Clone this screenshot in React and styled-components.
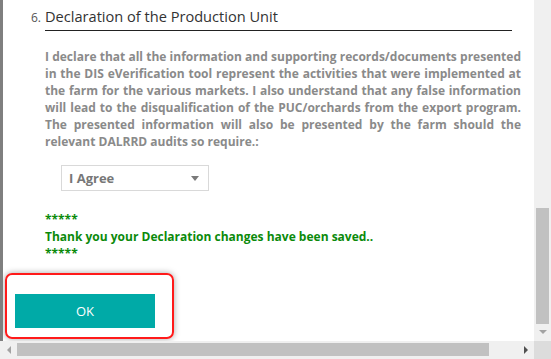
import React from "react";
import styled, { createGlobalStyle } from "styled-components";

const Global = createGlobalStyle`
  html, body { margin: 0; padding: 0; background: #fff; }
  body { font-family: "Open Sans", "Liberation Sans", sans-serif; }
`;

const Frame = styled.div`
  width: 551px;
  height: 359px;
  overflow: hidden;
  display: grid;
  grid-template-columns: 534px 17px;
  grid-template-rows: 341px 18px;
  background: #fff;
`;

const Viewport = styled.div`
  border-left: 3px solid #7f7f7f;
  display: flex;
  flex-direction: column;
  overflow: hidden;
  background: #fff;
`;

const Body = styled.div`
  padding: 6px 13px 0 28px;
`;

const TitleRow = styled.div`
  display: flex;
  align-items: baseline;
`;

const Num = styled.span`
  width: 14px;
  font-size: 12px;
  color: #555;
`;

const Heading = styled.h2`
  flex: 1;
  margin: 0 9px 0 0;
  padding-bottom: 4px;
  border-bottom: 1px solid #222;
  font-size: 14.6px;
  line-height: 20px;
  font-weight: 400;
  color: #333;
`;

const Section = styled.div`
  margin-left: 14px;
`;

const Para = styled.p`
  margin: 17px 0 0;
  font-size: 12px;
  line-height: 17px;
  font-weight: 700;
  color: #8a8a8a;
  text-align: justify;
`;

const Select = styled.div`
  margin: 15px 0 0 16px;
  width: 130px;
  height: 24px;
  border: 1px solid #d9d9d9;
  display: flex;
  align-items: center;
  justify-content: space-between;
  padding: 0 9px 0 7px;
  font-size: 13px;
  font-weight: 700;
  color: #777;
`;

const Caret = styled.span`
  width: 0;
  height: 0;
  border-left: 4px solid transparent;
  border-right: 4px solid transparent;
  border-top: 5px solid #7a7a7a;
`;

const Notice = styled.div`
  margin-top: 20px;
  font-size: 12px;
  line-height: 17px;
  font-weight: 700;
  color: #0b8a0b;
`;

const Footer = styled.div`
  margin-top: 11px;
  padding-left: 2px;
`;

const Highlight = styled.div`
  width: 157px;
  height: 43px;
  border: 2px solid #ff1a1a;
  border-radius: 7px;
  box-shadow: 0 0 6px rgba(0, 0, 0, 0.35);
  padding: 19px 0 0 8px;
`;

const OkButton = styled.button`
  width: 140px;
  height: 34px;
  border: none;
  background: #00aaa7;
  color: #fff;
  font-family: "Open Sans", "Liberation Sans", sans-serif;
  font-size: 13px;
  padding: 0;
`;

const VScroll = styled.div`
  background: #f0f0f0;
  display: flex;
  flex-direction: column;
  align-items: center;
  padding-top: ${(p) => p.$offset}px;
`;

const VThumb = styled.div`
  width: 13px;
  height: 116px;
  background: #c1c1c1;
`;

const ArrowDown = styled.div`
  margin-top: 6px;
  width: 0;
  height: 0;
  border-left: 4px solid transparent;
  border-right: 4px solid transparent;
  border-top: 4px solid #a3a3a3;
`;

const HScroll = styled.div`
  background: #f0f0f0;
  display: flex;
  align-items: center;
  padding: 0 6px 1px 7px;
`;

const ArrowLeft = styled.div`
  width: 0;
  height: 0;
  border-top: 4px solid transparent;
  border-bottom: 4px solid transparent;
  border-right: 4px solid #a3a3a3;
`;

const ArrowRight = styled.div`
  width: 0;
  height: 0;
  margin-left: auto;
  border-top: 4px solid transparent;
  border-bottom: 4px solid transparent;
  border-left: 4px solid #505050;
`;

const HThumb = styled.div`
  margin-left: 6px;
  width: 472px;
  height: 13px;
  background: #c1c1c1;
`;

const Corner = styled.div`
  background: #dcdcdc;
`;

export default function App() {
  return (
    <>
      <Global />
      <Frame>
        <Viewport>
          <Body>
            <TitleRow>
              <Num>6.</Num>
              <Heading>Declaration of the Production Unit</Heading>
            </TitleRow>
            <Section>
              <Para>
                I declare that all the information and supporting records/documents presented in the DIS eVerification tool represent the activities that were implemented at the farm for the various markets. I also understand that any false information will lead to the disqualification of the PUC/orchards from the export program. The presented information will also be presented by the farm should the relevant DALRRD audits so require.:
              </Para>
              <Select>
                <span>I Agree</span>
                <Caret />
              </Select>
              <Notice>
                *****
                <br />
                Thank you your Declaration changes have been saved..
                <br />
                *****
              </Notice>
            </Section>
          </Body>
          <Footer>
            <Highlight>
              <OkButton>OK</OkButton>
            </Highlight>
          </Footer>
        </Viewport>
        <VScroll $offset={208}>
          <VThumb />
          <ArrowDown />
        </VScroll>
        <HScroll>
          <ArrowLeft />
          <HThumb />
          <ArrowRight />
        </HScroll>
        <Corner />
      </Frame>
    </>
  );
}
